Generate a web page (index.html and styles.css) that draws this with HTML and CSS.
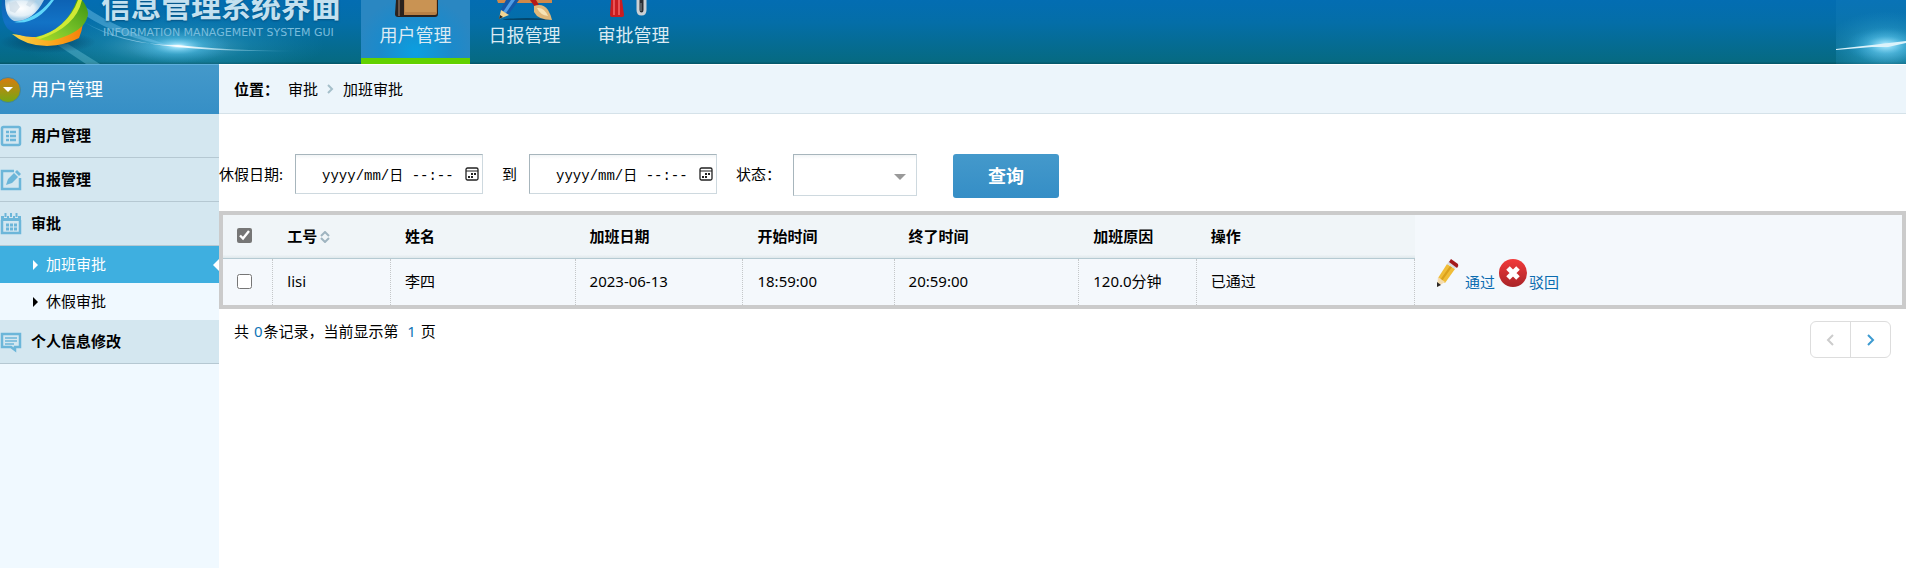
FILE: index.html
```html
<!DOCTYPE html>
<html lang="zh-CN">
<head>
<meta charset="utf-8">
<title>信息管理系统界面</title>
<link rel="stylesheet" href="styles.css">
</head>
<body>
<header class="top">
  <div class="brand">
    <svg class="brand-art" width="361" height="64" viewBox="0 0 361 64" aria-hidden="true">
      <defs>
        <radialGradient id="glow"><stop offset="0" stop-color="#dff8ff"/><stop offset=".15" stop-color="#8fdcf8" stop-opacity=".9"/><stop offset=".5" stop-color="#3fb4e0" stop-opacity=".45"/><stop offset="1" stop-color="#2b9bd0" stop-opacity="0"/></radialGradient>
        <linearGradient id="streak" x1="0" x2="1"><stop offset="0" stop-color="#6cc4f0" stop-opacity=".3"/><stop offset=".45" stop-color="#fff"/><stop offset="1" stop-color="#7fd4ee" stop-opacity="0"/></linearGradient>
        <linearGradient id="blue" x1="0" y1="0" x2="0" y2="1"><stop offset="0" stop-color="#0d62b4"/><stop offset=".6" stop-color="#1273c6"/><stop offset="1" stop-color="#0f62b8"/></linearGradient>
        <linearGradient id="green" x1="0" y1="1" x2="1" y2="0"><stop offset="0" stop-color="#b4dc1e"/><stop offset=".4" stop-color="#7cc62c"/><stop offset="1" stop-color="#3f940f"/></linearGradient>
        <linearGradient id="orange" x1="0" x2="1"><stop offset="0" stop-color="#f9d548"/><stop offset=".6" stop-color="#fba51c"/><stop offset="1" stop-color="#f47f0a"/></linearGradient>
        <radialGradient id="globe" cx=".4" cy=".4"><stop offset="0" stop-color="#fff"/><stop offset=".7" stop-color="#e3eff7"/><stop offset="1" stop-color="#a9cfe8"/></radialGradient>
        <radialGradient id="shade"><stop offset="0" stop-color="#023a5c" stop-opacity=".8"/><stop offset="1" stop-color="#023a5c" stop-opacity="0"/></radialGradient>
      </defs>
      <ellipse cx="175" cy="46" rx="150" ry="34" fill="url(#glow)" opacity=".5"/>
      <ellipse cx="178" cy="46" rx="52" ry="17" fill="url(#glow)"/>
      <path d="M84 6 Q118 30 172 46 Q120 38 86 16Z" fill="#7fcdf2" opacity=".4"/>
      <path d="M56 44 L68 44 L100 64 L86 64Z" fill="#7fd0e6" opacity=".35"/>
      <path d="M84 22 Q120 45 177 45 Q230 51 300 51 Q225 52 177 47 Q120 42 84 22Z" fill="url(#streak)"/>
      <ellipse cx="48" cy="42" rx="48" ry="11" fill="url(#shade)"/>
      <path d="M12 34 Q26 46 47 46 Q66 45 79 38 Q82 31 83 23 L45 38Z" fill="url(#orange)"/>
      <path d="M33 36 Q42 42 54 40 Q76 34 84 24 Q88 18 88 13 Q87 6 82 0 L70 0Z" fill="url(#green)"/>
      <path d="M35 38 Q68 28 78 0 L82 0 Q76 27 40 39Z" fill="#d0ea34"/>
      <path d="M2 0 Q0 20 8 29 Q20 38 36 37 Q66 30 77 0Z" fill="url(#blue)"/>
      <path d="M14 22 Q36 26 54 0 L51 0 Q36 19 14 22Z" fill="#5fd6fa"/>
      <path d="M5 0 Q5 17 14 21 Q33 22 44 0Z" fill="url(#globe)"/>
      <path d="M9 3 L16 1 L20 7 L15 13 L10 11Z M29 0 L36 0 L30 7 L26 5Z" fill="#bfd2e0" opacity=".5"/>
    </svg>
    <div class="brand-text">
      <strong class="brand-name">信息管理系统界面</strong>
      <span class="brand-sub">INFORMATION MANAGEMENT SYSTEM GUI</span>
    </div>
  </div>
  <nav class="nav">
    <a class="nav-item active" href="#">
      <svg width="60" height="20" viewBox="0 0 60 20" aria-hidden="true"><path d="M10 0H52V14Q52 17 49 17H12Q9 17 9 14Z" fill="#2b221d"/><path d="M18 0H51V13Q51 15 49 15H18Z" fill="#b98045"/><path d="M19 0H50V12H19Z" fill="#c99353"/><path d="M13 0V16" stroke="#6b5546" stroke-width="2"/></svg>
      <span>用户管理</span>
    </a>
    <a class="nav-item" href="#">
      <svg width="60" height="20" viewBox="0 0 60 20" aria-hidden="true"><ellipse cx="32" cy="20" rx="24" ry="2" fill="#03466c"/><path d="M2 0H57V3H3Z" fill="#d0894a"/><path d="M11 0H24L13 15L5 11Z" fill="#1458a8"/><path d="M16 0H20L11 13L8 12Z" fill="#4f9de6"/><path d="M6 10L14 15L4 19Z" fill="#f2d492"/><path d="M5 15L8 17L4 19Z" fill="#29231f"/><path d="M35 0H41L44 5L40 7Z" fill="#b51a18"/><path d="M39 6Q48 3 53 10Q56 15 57 20Q43 20 39 12Z" fill="#e0b87a"/><path d="M42 8Q49 7 53 16Q45 15 42 8Z" fill="#f7e3b5"/></svg>
      <span>日报管理</span>
    </a>
    <a class="nav-item" href="#">
      <svg width="60" height="20" viewBox="0 0 60 20" aria-hidden="true"><path d="M7 0H18L20 15Q20 17 18 17H8Q6 17 6 15Z" fill="#c91c20"/><path d="M10 0V15M15 0V15" stroke="#ea5355" stroke-width="2"/><path d="M34 0V10Q34 14 37.500 14Q41 14 41 10V0" fill="#292d33" stroke="#cbd0d4" stroke-width="3"/><path d="M37 3V11" stroke="#555b60" stroke-width="2"/></svg>
      <span>审批管理</span>
    </a>
  </nav>
  <svg class="flare" width="70" height="64" viewBox="0 0 70 64" aria-hidden="true">
    <rect width="70" height="64" fill="#36a8d8" opacity=".12"/>
    <ellipse cx="50" cy="47" rx="62" ry="36" fill="url(#glow)" opacity=".7"/>
    <ellipse cx="50" cy="45" rx="40" ry="18" fill="url(#glow)"/>
    <path d="M0 49L36 45L70 41V43L52 47L36 47L0 50Z" fill="#dcf3fb"/>
  </svg>
</header>

<div class="layout">
  <aside class="side">
    <div class="side-title">
      <svg width="21" height="26" viewBox="0 0 21 26" aria-hidden="true"><defs><linearGradient id="badge" x2="0" y2="1"><stop offset="0" stop-color="#d97b0d"/><stop offset="1" stop-color="#73a815"/></linearGradient></defs><circle cx="8" cy="13" r="12.500" fill="url(#badge)" stroke="#3c84a6" stroke-width="1"/><path d="M3 10H13L8 15Z" fill="#fff"/></svg>
      <span>用户管理</span>
    </div>
    <a class="side-item" href="#">
      <svg width="22" height="22" viewBox="0 0 22 22" aria-hidden="true"><rect x="2" y="2" width="18" height="18" rx="1.500" fill="none" stroke="#6cb6d9" stroke-width="2.500"/><path d="M6 7H9M10 7H16M6 11H9M10 11H16M6 15H9M10 15H16" stroke="#6cb6d9" stroke-width="2.500"/></svg>
      <span>用户管理</span>
    </a>
    <a class="side-item" href="#">
      <svg width="22" height="22" viewBox="0 0 22 22" aria-hidden="true"><path d="M14 2H2V20H20V9" fill="none" stroke="#6cb6d9" stroke-width="2.500"/><path d="M6 16L8 10L14 4L18 8L12 14ZM15 3L17 1L21 5L19 7Z" fill="#6cb6d9"/></svg>
      <span>日报管理</span>
    </a>
    <a class="side-item" href="#">
      <svg width="22" height="22" viewBox="0 0 22 22" aria-hidden="true"><path d="M2 7V20H20V7" fill="none" stroke="#6cb6d9" stroke-width="2.500"/><path d="M1 3H4V5H7V3H9V5H13V3H15V5H18V3H21V8H1Z" fill="#6cb6d9"/><path d="M5.500 0V4M11 0V4M16.500 0V4" stroke="#6cb6d9" stroke-width="2"/><path d="M6 12H17M6 16H17" stroke="#6cb6d9" stroke-width="3" stroke-dasharray="3 1"/></svg>
      <span>审批</span>
    </a>
    <a class="side-sub active" href="#"><i class="tri"></i><span>加班审批</span></a>
    <a class="side-sub" href="#"><i class="tri"></i><span>休假审批</span></a>
    <a class="side-item" href="#">
      <svg width="22" height="22" viewBox="0 0 22 22" aria-hidden="true"><path d="M2 3H20V16H15V19L11 16H2Z" fill="none" stroke="#6cb6d9" stroke-width="2.500"/><path d="M5 7H17M5 10H17M5 13H14" stroke="#6cb6d9" stroke-width="1.500"/></svg>
      <span>个人信息修改</span>
    </a>
  </aside>

  <main class="main">
    <nav class="crumbs">
      <strong>位置：</strong>
      <a href="#">审批</a>
      <svg width="7" height="10" viewBox="0 0 7 10" aria-hidden="true"><path d="M1 1L5 5L1 9" fill="none" stroke="#a5bfca" stroke-width="2"/></svg>
      <a href="#">加班审批</a>
    </nav>

    <form class="filter">
      <label for="from">休假日期:</label>
      <div class="date">
        <input id="from" type="text" value="yyyy/mm/日 --:--">
        <svg width="14" height="14" viewBox="0 0 14 14" aria-hidden="true"><rect x="1" y="1" width="12" height="12" rx="1.500" fill="none" stroke="#222" stroke-width="1.300"/><path d="M1 4H13" stroke="#222"/><path d="M6 7H12M3 10H9" stroke="#222" stroke-width="2" stroke-dasharray="2 1"/></svg>
      </div>
      <label class="to" for="to">到</label>
      <div class="date">
        <input id="to" type="text" value="yyyy/mm/日 --:--">
        <svg width="14" height="14" viewBox="0 0 14 14" aria-hidden="true"><rect x="1" y="1" width="12" height="12" rx="1.500" fill="none" stroke="#222" stroke-width="1.300"/><path d="M1 4H13" stroke="#222"/><path d="M6 7H12M3 10H9" stroke="#222" stroke-width="2" stroke-dasharray="2 1"/></svg>
      </div>
      <label class="state" for="state">状态：</label>
      <div class="select">
        <select id="state"><option></option></select>
        <i class="caret"></i>
      </div>
      <button class="search" type="button">查询</button>
    </form>

    <table class="grid">
      <colgroup><col class="w3"><col class="w7"><col class="w11"><col class="w10"><col class="w9"><col class="w11"><col class="w7"><col class="w13"><col></colgroup>
      <thead>
        <tr>
          <th><input type="checkbox" checked aria-label="全选"></th>
          <th>工号<svg class="sort" width="10" height="12" viewBox="0 0 10 12" aria-hidden="true"><path d="M1 5L5 1L9 5M1 7L5 11L9 7" fill="none" stroke="#9fb4c0" stroke-width="2"/></svg></th>
          <th>姓名</th><th>加班日期</th><th>开始时间</th><th>终了时间</th><th>加班原因</th><th>操作</th>
        </tr>
      </thead>
      <tbody>
        <tr>
          <td><input type="checkbox" aria-label="选择 lisi"></td>
          <td>lisi</td><td>李四</td><td>2023-06-13</td><td>18:59:00</td><td>20:59:00</td><td>120.0分钟</td><td>已通过</td>
          <td class="ops">
            <div class="ops-row">
              <svg width="32" height="30" viewBox="0 0 32 30" aria-hidden="true"><path d="M15 5L23 10L13 24L6 19Z" fill="#f0bd38"/><path d="M18 7L20 8L10 22L8 21Z" fill="#dba11c"/><path d="M6 18L13 23L5 28Z" fill="#f4dcae"/><path d="M5 23L9 26L5 28Z" fill="#2c2926"/><path d="M15 5L17 2L25 7L23 10Z" fill="#d9dde0"/><path d="M17 3L19 0L26 5Q27 7 25 9Z" fill="#a31a1c"/></svg>
              <a href="#">通过</a>
              <svg width="30" height="30" viewBox="0 0 30 30" aria-hidden="true"><defs><linearGradient id="red" x2="0" y2="1"><stop offset="0" stop-color="#f23a3a"/><stop offset="1" stop-color="#a92428"/></linearGradient></defs><circle cx="15" cy="14" r="14" fill="url(#red)"/><path d="M10 9L20 19M20 9L10 19" stroke="#fff" stroke-width="5"/></svg>
              <a href="#">驳回</a>
            </div>
          </td>
        </tr>
      </tbody>
    </table>

    <footer class="pager">
      <p>共 <b>0</b>条记录，当前显示第 &nbsp;<b>1</b> 页</p>
      <div class="pages">
        <button type="button" aria-label="上一页"><svg width="9" height="12" viewBox="0 0 9 12"><path d="M7 1L2 6L7 11" fill="none" stroke="#ccc" stroke-width="2"/></svg></button>
        <button type="button" aria-label="下一页"><svg width="9" height="12" viewBox="0 0 9 12"><path d="M2 1L7 6L2 11" fill="none" stroke="#3d9bd1" stroke-width="2"/></svg></button>
      </div>
    </footer>
  </main>
</div>
</body>
</html>
```
FILE: styles.css
```css
* { box-sizing: border-box; }
body {
  margin: 0;
  min-height: 100vh;
  display: flex;
  flex-direction: column;
  background: #fff;
  color: #000;
  font: 15px/20px "Noto Sans", "Noto Sans CJK SC", sans-serif;
}
a { color: inherit; text-decoration: none; }
svg { display: block; flex: none; }

.top {
  display: flex;
  height: 64px;
  overflow: hidden;
  background: linear-gradient(#036db2 0, #046ea8 35%, #066a82 96%, #055567 100%);
}
.brand { position: relative; flex: none; width: 361px; }
.brand-art { position: absolute; left: 0; top: 0; }
.brand-text {
  position: relative;
  display: flex;
  flex-direction: column;
  padding-left: 101px;
  margin-top: -12px;
  white-space: nowrap;
}
.brand-name {
  font-size: 30px;
  line-height: 36px;
  font-weight: 700;
  color: #c3e0ef;
  text-shadow: 0 1px 2px #05507f;
}
.brand-sub {
  padding-left: 2px;
  font: 11px/18px "DejaVu Sans", sans-serif;
  color: #79bcdc;
}
.nav { display: flex; }
.nav-item {
  display: flex;
  flex-direction: column;
  align-items: center;
  width: 109px;
  height: 64px;
  color: #dbeaf3;
  font-size: 18px;
  line-height: 30px;
}
.nav-item.active {
  background: radial-gradient(ellipse 60px 56px at 50% 90%, #0b9fe0, #1b8acb 60%, #2a87c2);
  border-bottom: 6px solid #62d100;
}
.flare { margin-left: auto; }

.layout { display: flex; flex: 1; }
.side { flex: none; width: 219px; background: #f0f9ff; }
.side span { padding-bottom: 2px; }
.side-title {
  display: flex;
  align-items: center;
  gap: 10px;
  height: 50px;
  border-top: 1px solid #5fb0dd;
  background: linear-gradient(#4499ca, #368fc6);
  color: #fff;
  font-size: 18px;
}
.side-item {
  display: flex;
  align-items: center;
  gap: 9px;
  height: 44px;
  border-bottom: 1px solid #b5c8d2;
  background: #d4e7f0;
  font-weight: 700;
}
.side-sub {
  position: relative;
  display: flex;
  align-items: center;
  gap: 8px;
  height: 37px;
  padding-left: 33px;
}
.side-sub.active { background: #3eafe0; color: #fff; }
.side-sub.active::after {
  content: "";
  position: absolute;
  right: 0;
  border: 6px solid transparent;
  border-left: 0;
  border-right-color: #fff;
}
.tri { border: 5px solid transparent; border-left-color: currentColor; border-right: 0; }

.main { flex: 1; min-width: 0; }
.crumbs {
  display: flex;
  align-items: center;
  gap: 9px;
  height: 50px;
  padding-left: 15px;
  border-top: 1px solid #fff;
  border-bottom: 1px solid #d5e2e9;
  background: #ecf5fb;
}
.filter {
  display: flex;
  align-items: center;
  height: 44px;
  margin: 40px 0 13px;
}
.filter label { padding-bottom: 4px; }
.date { position: relative; align-self: flex-start; margin-left: 12px; }
.date input, .select select {
  display: block;
  width: 188px;
  height: 40px;
  border: 1px solid #a7b5bc;
  border-right-color: #ced9df;
  border-bottom-color: #ced9df;
  border-radius: 0;
  background: linear-gradient(#f2f5f6, #fff 4px);
}
.date input { padding: 0 20px 0 26px; font: 14px/20px "Liberation Mono", "Noto Sans CJK SC", monospace; color: #000; }
.date svg { position: absolute; right: 4px; top: 13px; }
.filter .to { margin-left: 19px; }
.filter .state { width: 57px; margin-left: 19px; white-space: nowrap; }
.select { position: relative; align-self: flex-start; }
.select select { appearance: none; width: 124px; height: 42px; }
.caret {
  position: absolute;
  right: 11px;
  top: 20px;
  border: 6px solid transparent;
  border-top-color: #999;
  border-bottom: 0;
  pointer-events: none;
}
.search {
  width: 106px;
  height: 44px;
  margin-left: 36px;
  padding: 0;
  border: 0;
  border-radius: 3px;
  background: linear-gradient(#4499cb, #358ec6);
  color: #fff;
  font: 700 18px/24px "Noto Sans", "Noto Sans CJK SC", sans-serif;
}

.grid {
  width: 100%;
  border: 4px solid #cbcbcb;
  border-collapse: separate;
  border-spacing: 0;
  table-layout: fixed;
  background: #f4f8fc;
}
.w3 { width: 3%; }
.w7 { width: 7%; }
.w9 { width: 9%; }
.w10 { width: 10%; }
.w11 { width: 11%; }
.w13 { width: 13%; }
.grid th {
  height: 44px;
  padding: 0 0 2px 14px;
  border-bottom: 1px solid #b5cad2;
  background: linear-gradient(#f0f5f8 92%, #dfe8eb);
  text-align: left;
}
.grid td { height: 46px; padding: 0 0 2px 14px; border-right: 1px dotted #c4c7c9; }
.grid input { display: block; width: 15px; height: 15px; margin: 0; accent-color: #767676; }
.sort { display: inline-block; margin-left: 3px; vertical-align: -1px; }
.grid td.ops { padding-left: 17px; border-right: 0; vertical-align: top; color: #0b6cb0; }
.ops-row { display: flex; align-items: flex-start; }
.ops-row svg { margin-right: 1px; }
.ops-row a { padding-top: 13px; margin-right: 3px; }

.pager { display: flex; justify-content: space-between; padding: 12px 15px 0; }
.pager p { margin: 0; }
.pager b { padding: 0 1px; font-weight: 400; color: #0f74b6; }
.pages { display: flex; border: 1px solid #ddd; border-radius: 6px; }
.pages button {
  display: flex;
  align-items: center;
  justify-content: center;
  width: 39px;
  height: 35px;
  padding: 0;
  border: 0;
  background: none;
}
.pages button + button { width: 40px; border-left: 1px solid #ddd; }
```
